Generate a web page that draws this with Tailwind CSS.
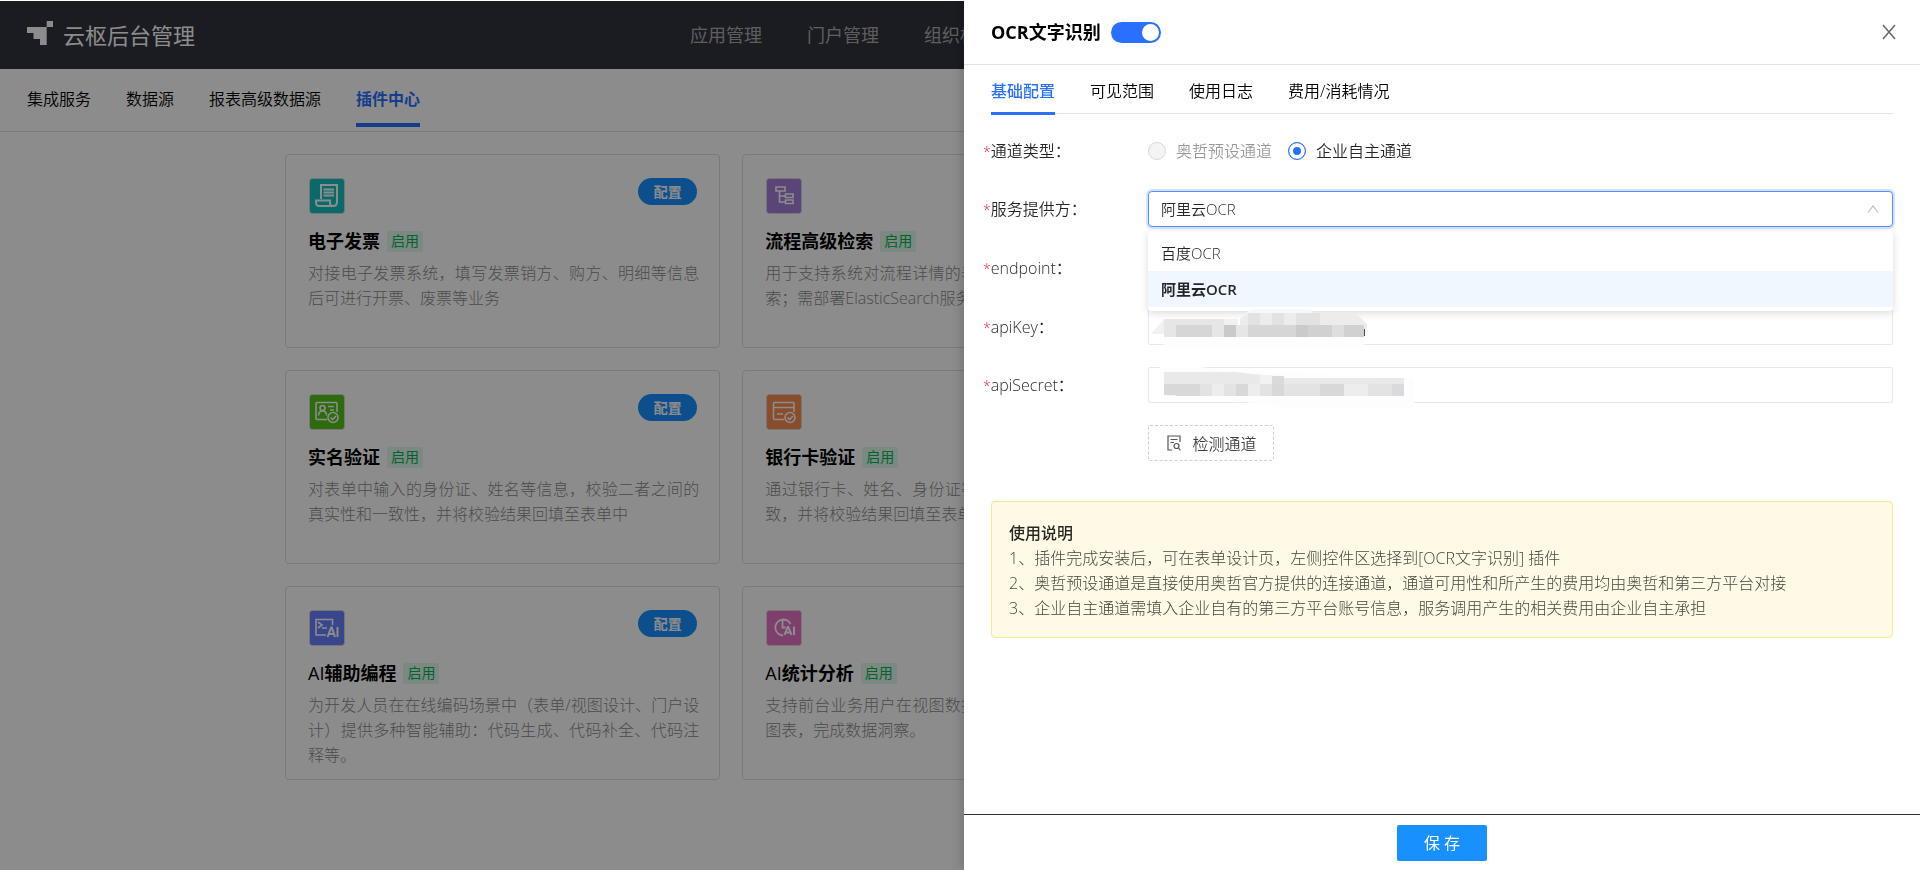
<!DOCTYPE html>
<html lang="zh-CN">
<head>
<meta charset="utf-8">
<title>云枢后台管理</title>
<script src="https://cdn.jsdelivr.net/npm/@tailwindcss/browser@4"></script>
</head>
<body class="min-h-screen bg-white pt-px font-['Open_Sans','Noto_Sans_CJK_SC',sans-serif] text-base text-black">

<header class="flex h-[68px] items-center bg-[#31333c] px-[27px] text-white">
  <div class="flex w-[663px] items-center gap-2.5">
    <svg class="mb-1 h-6 w-[26px]" viewBox="0 0 26 24" fill="currentColor" aria-hidden="true"><path d="M19.7 0H26v6h-6.3zM0 6h19.7v18H13v-6H6.5v-6H0z"/></svg>
    <h1 class="text-[22px] leading-8">云枢后台管理</h1>
  </div>
  <nav class="flex gap-[45px] text-lg text-white/60">
    <a href="#">应用管理</a>
    <a href="#">门户管理</a>
    <a href="#">组织权限</a>
  </nav>
</header>

<nav class="flex h-[63px] gap-[35px] border-b border-[#dedede] px-[27px] font-[350]">
  <a href="#" class="pt-[18px] leading-6">集成服务</a>
  <a href="#" class="pt-[18px] leading-6">数据源</a>
  <a href="#" class="pt-[18px] leading-6">报表高级数据源</a>
  <a href="#" class="mb-1 border-b-4 border-[#2970ff] pt-[18px] font-bold leading-6 text-[#2970ff]">插件中心</a>
</nav>

<main class="mx-auto grid max-w-[1350px] grid-cols-3 gap-[22px] pt-[22px]">
  <article class="col-start-1 min-h-[194px] rounded border border-[#dedede] pl-[22px] pr-5 pt-[23px]">
    <div class="flex items-start justify-between pl-px pr-0.5">
      <svg class="h-9 w-9" viewBox="0 0 36 36" fill="none" stroke="#fff" stroke-width="2" aria-hidden="true"><rect x=".5" y=".5" width="35" height="35" rx="3" fill="#13c2c2" stroke="#d9d9d9" stroke-width="1"/><path d="M12 21V7h16v17c0 4-3 4-4 4H11.500M14.500 11.500H25M14.500 14.500H25M14.500 17.500H25M16 28H10c-2 0-3-2-3-4v-1.500h14V25c0 1.500 1 3 3 3"/></svg>
      <button class="h-[27px] w-[59px] rounded-full bg-[#1890ff] text-sm font-bold text-white">配置</button>
    </div>
    <div class="mt-[13px] flex h-7 items-center gap-[7px]"><h2 class="text-lg font-bold">电子发票</h2><span class="flex h-[21px] items-center rounded-xs bg-[#e2f7ed] px-1 text-sm text-[#00b853]">启用</span></div>
    <p class="mt-1.5 text-justify font-light leading-[25px] text-[#8c8c8c]">对接电子发票系统，填写发票销方、购方、明细等信息后可进行开票、废票等业务</p>
  </article>

  <article class="col-start-2 min-h-[194px] rounded border border-[#dedede] pl-[22px] pr-5 pt-[23px]">
    <svg class="ml-px h-9 w-9" viewBox="0 0 36 36" fill="none" stroke="#fff" stroke-width="1.600" aria-hidden="true"><rect x=".5" y=".5" width="35" height="35" rx="3" fill="#a77ddb" stroke="#d9d9d9" stroke-width="1"/><path d="M10 9h9v4h-9zM19.500 16h7.500v3.500h-7.500zM19.500 22h7.500v3.500h-7.500zM13.500 13v11h6M13.500 18h6"/></svg>
    <div class="mt-[13px] flex h-7 items-center gap-[7px]"><h2 class="text-lg font-bold">流程高级检索</h2><span class="flex h-[21px] items-center rounded-xs bg-[#e2f7ed] px-1 text-sm text-[#00b853]">启用</span></div>
    <p class="mt-1.5 text-justify font-light leading-[25px] text-[#8c8c8c]">用于支持系统对流程详情的表单数据、审批意见进行检索；需部署ElasticSearch服务</p>
  </article>

  <article class="col-start-1 min-h-[194px] rounded border border-[#dedede] pl-[22px] pr-5 pt-[23px]">
    <div class="flex items-start justify-between pl-px pr-0.5">
      <svg class="h-9 w-9" viewBox="0 0 36 36" fill="none" stroke="#fff" stroke-width="1.600" aria-hidden="true"><rect x=".5" y=".5" width="35" height="35" rx="3" fill="#52c41a" stroke="#d9d9d9" stroke-width="1"/><path d="M18 25.500H8c-.8 0-1-.4-1-1v-15c0-.8.4-1 1-1h19c.8 0 1 .4 1 1V18M19 12.500h6M21 16h4M9.500 21.500c0-3 1.500-4.500 4-4.500s4 1.500 4 4.500"/><circle cx="13.500" cy="14" r="2.500"/><circle cx="24" cy="23.500" r="5"/><path d="m21.500 23.500 2 2 3.500-3.500"/></svg>
      <button class="h-[27px] w-[59px] rounded-full bg-[#1890ff] text-sm font-bold text-white">配置</button>
    </div>
    <div class="mt-[13px] flex h-7 items-center gap-[7px]"><h2 class="text-lg font-bold">实名验证</h2><span class="flex h-[21px] items-center rounded-xs bg-[#e2f7ed] px-1 text-sm text-[#00b853]">启用</span></div>
    <p class="mt-1.5 text-justify font-light leading-[25px] text-[#8c8c8c]">对表单中输入的身份证、姓名等信息，校验二者之间的真实性和一致性，并将校验结果回填至表单中</p>
  </article>

  <article class="col-start-2 min-h-[194px] rounded border border-[#dedede] pl-[22px] pr-5 pt-[23px]">
    <svg class="ml-px h-9 w-9" viewBox="0 0 36 36" fill="none" stroke="#fff" stroke-width="1.600" aria-hidden="true"><rect x=".5" y=".5" width="35" height="35" rx="3" fill="#fa8c50" stroke="#d9d9d9" stroke-width="1"/><path d="M18 25.500H8.500c-.8 0-1-.4-1-1v-15c0-.8.4-1 1-1h18.500c.8 0 1 .4 1 1V18M7.500 13.500H28M11 20h6"/><circle cx="24" cy="23.500" r="5"/><path d="m21.500 23.500 2 2 3.500-3.500"/></svg>
    <div class="mt-[13px] flex h-7 items-center gap-[7px]"><h2 class="text-lg font-bold">银行卡验证</h2><span class="flex h-[21px] items-center rounded-xs bg-[#e2f7ed] px-1 text-sm text-[#00b853]">启用</span></div>
    <p class="mt-1.5 text-justify font-light leading-[25px] text-[#8c8c8c]">通过银行卡、姓名、身份证等信息，校验各要素是否一致，并将校验结果回填至表单中</p>
  </article>

  <article class="col-start-1 min-h-[194px] rounded border border-[#dedede] pl-[22px] pr-5 pt-[23px]">
    <div class="flex items-start justify-between pl-px pr-0.5">
      <svg class="h-9 w-9" viewBox="0 0 36 36" fill="none" stroke="#fff" stroke-width="1.600" aria-hidden="true"><rect x=".5" y=".5" width="35" height="35" rx="3" fill="#6b80ff" stroke="#d9d9d9" stroke-width="1"/><path d="M17 25H7V9.500h16.500V15M9 12l4 3-4 3M13 18h5"/><path d="m18.500 27 3.700-9.500h.6L26 27M20 24h5M28.500 17v10" stroke-width="2"/></svg>
      <button class="h-[27px] w-[59px] rounded-full bg-[#1890ff] text-sm font-bold text-white">配置</button>
    </div>
    <div class="mt-[13px] flex h-7 items-center gap-[7px]"><h2 class="text-lg font-bold"><span class="font-medium">AI</span>辅助编程</h2><span class="flex h-[21px] items-center rounded-xs bg-[#e2f7ed] px-1 text-sm text-[#00b853]">启用</span></div>
    <p class="mt-1.5 text-justify font-light leading-[25px] text-[#8c8c8c]">为开发人员在在线编码场景中（表单/视图设计、门户设计）提供多种智能辅助：代码生成、代码补全、代码注释等。</p>
  </article>

  <article class="col-start-2 min-h-[194px] rounded border border-[#dedede] pl-[22px] pr-5 pt-[23px]">
    <svg class="ml-px h-9 w-9" viewBox="0 0 36 36" fill="none" stroke="#fff" stroke-width="1.800" aria-hidden="true"><rect x=".5" y=".5" width="35" height="35" rx="3" fill="#e873c8" stroke="#d9d9d9" stroke-width="1"/><path d="M17 25.500A8 8 0 1 1 24.500 14M16.500 9.500v8h3"/><path d="m18.500 25 3.200-8h.6l3.200 8M20 22.500h4M28 16.500V25" stroke-width="2"/></svg>
    <div class="mt-[13px] flex h-7 items-center gap-[7px]"><h2 class="text-lg font-bold"><span class="font-medium">AI</span>统计分析</h2><span class="flex h-[21px] items-center rounded-xs bg-[#e2f7ed] px-1 text-sm text-[#00b853]">启用</span></div>
    <p class="mt-1.5 text-justify font-light leading-[25px] text-[#8c8c8c]">支持前台业务用户在视图数据列表中通过对话快速生成图表，完成数据洞察。</p>
  </article>
</main>

<div class="fixed inset-0 top-px bg-black/45"></div>

<aside role="dialog" aria-labelledby="drawer-title" class="fixed inset-y-0 right-0 flex w-[956px] max-w-full flex-col bg-white shadow-[-4px_0_10px_rgba(0,0,0,0.15)]">
  <header class="flex h-[65px] items-center border-b border-[#e4e4e4] pl-[27px] pr-6">
    <h2 id="drawer-title" class="text-lg font-bold">OCR文字识别</h2>
    <label class="ml-2.5 flex">
      <input type="checkbox" checked aria-label="启用OCR文字识别" class="peer sr-only">
      <span class="flex h-[21px] w-[50px] items-center justify-end rounded-full bg-[#2970ff] p-0.5"><span class="h-[17px] w-[17px] rounded-full bg-white"></span></span>
    </label>
    <button aria-label="关闭" class="ml-auto">
      <svg class="h-4 w-[14px]" viewBox="0 0 14 16" fill="none" stroke="#666" stroke-width="1.500"><path d="m1 1 12 14M13 1 1 15"/></svg>
    </button>
  </header>

  <div class="flex-1 px-[27px]">
    <div role="tablist" class="flex h-[49px] gap-[35px] border-b border-[#e4e4e4] font-[350]">
      <button role="tab" aria-selected="true" class="-mb-0.5 border-b-3 border-[#2970ff] pt-1 font-medium text-[#2970ff]">基础配置</button>
      <button role="tab" class="pt-1">可见范围</button>
      <button role="tab" class="pt-1">使用日志</button>
      <button role="tab" class="pt-1">费用/消耗情况</button>
    </div>

    <form class="mt-[19px] flex flex-col gap-[22px] font-[350] text-black/85">
      <div class="flex h-9 items-center" role="radiogroup" aria-labelledby="type-label">
        <span id="type-label" class="-ml-2 w-[165px]"><span class="text-sm text-[#f5222d]">*</span>通道类型：</span>
        <label class="flex items-center gap-2.5 text-black/40"><input type="radio" name="channel" disabled class="h-[18px] w-[18px] appearance-none rounded-full border border-[#d9d9d9] bg-[#f4f4f4]">奥哲预设通道</label>
        <label class="ml-4 flex items-center gap-2.5"><input type="radio" name="channel" checked class="h-[18px] w-[18px] appearance-none rounded-full border border-[#2970ff] bg-[#2970ff] shadow-[inset_0_0_0_4px_#fff]">企业自主通道</label>
      </div>

      <div class="relative flex h-9 items-center">
        <label for="provider" class="-ml-2 w-[165px]"><span class="text-sm text-[#f5222d]">*</span>服务提供方：</label>
        <div class="relative flex-1">
          <select id="provider" class="block h-9 w-full appearance-none rounded border border-[#5490ff] bg-white px-3 text-[15px] shadow-[0_0_0_2px_#d4e2ff] outline-none">
            <option selected>阿里云OCR</option>
            <option>百度OCR</option>
          </select>
          <svg class="pointer-events-none absolute right-[14px] top-[14px] h-2 w-3" viewBox="0 0 12 8" fill="none" stroke="#bfbfbf" stroke-width="1.200" aria-hidden="true"><path d="m1 7.500 5-6.500 5 6.500"/></svg>
          <ul role="listbox" class="absolute inset-x-0 top-10 z-10 rounded bg-white py-1 text-[15px] leading-9 shadow-[0_2px_8px_rgba(0,0,0,0.15)]">
            <li role="option" class="px-[13px]">百度OCR</li>
            <li role="option" aria-selected="true" class="bg-[#f0f7ff] px-[13px] font-semibold">阿里云OCR</li>
          </ul>
        </div>
      </div>

      <div class="flex h-[37px] items-center">
        <label for="endpoint" class="-ml-2 w-[165px]"><span class="text-sm text-[#f5222d]">*</span>endpoint：</label>
        <input id="endpoint" type="text" class="h-9 flex-1 rounded-xs border border-[#e8e8e8] px-3">
      </div>

      <div class="flex h-[37px] items-center">
        <label for="api-key" class="-ml-2 w-[165px]"><span class="text-sm text-[#f5222d]">*</span>apiKey：</label>
        <div class="relative flex-1">
          <input id="api-key" type="text" class="block h-9 w-full rounded-xs border border-[#e8e8e8] px-3">
          <!-- pixelated mask over the stored key -->
          <svg class="absolute left-0 top-0 z-20 h-10 w-56" viewBox="0 0 224 40" aria-hidden="true">
            <path d="M16 28h200v12H16z" fill="#fdfdfd"/>
            <path d="M93 9 106 -3h33l25 4v4z" fill="#f5f8fe"/>
            <path d="M3 25 16 10h74v6H28v9z" fill="#f1f1f1"/>
            <path d="M92 10 100 4h108l11 11v5H92z" fill="#ececec"/>
            <path d="M16 10h60v6H16z" fill="#e6e6e6"/>
            <path d="M100 4h12v12h-12zM124 4h12v12h-12zM148 4h24v12h-24z" fill="#e2e2e2"/>
            <path d="M16 16h12v12H16zM64 16h12v12H64zM88 16h12v12H88z" fill="#e6e6e6"/>
            <path d="M28 16h36v12H28zM100 16h48v12h-48z" fill="#d6d6d6"/>
            <path d="M76 16h12v12H76zM148 16h12v12h-12z" fill="#cacaca"/>
            <path d="M160 16h24v12h-24zM196 16h20v12h-20z" fill="#d0d1d2"/>
            <path d="M184 16h12v12h-12z" fill="#dedede"/>
            <path d="M216 20h1v7h-1z" fill="#444"/>
          </svg>
        </div>
      </div>

      <div class="flex h-9 items-center">
        <label for="api-secret" class="-ml-2 w-[165px]"><span class="text-sm text-[#f5222d]">*</span>apiSecret：</label>
        <div class="relative flex-1">
          <input id="api-secret" type="text" class="block h-9 w-full rounded-xs border border-[#e8e8e8] px-3">
          <!-- pixelated mask over the stored secret -->
          <svg class="absolute left-0 top-0 h-[42px] w-[266px]" viewBox="0 0 266 42" aria-hidden="true">
            <path d="M12 0h40l32 4 182 7v30H140L82 33H12z" fill="#fdfdfd"/>
            <path d="M16 5h72l16 2 24 2v8H16z" fill="#e8e9e9"/>
            <path d="M112 8h12v9h-12z" fill="#f2f2f2"/>
            <path d="M124 9h12v8h-12z" fill="#dadada"/>
            <path d="M136 11h120v6H136z" fill="#e9e9e9"/>
            <path d="M16 17h240v12H38l-22-1z" fill="#e3e3e3"/>
            <path d="M16 17h12v11H16zM28 17h24v12H28zM88 17h12v12H88zM124 17h12v12h-12zM172 17h24v12h-24z" fill="#d7d8d8"/>
            <path d="M244 17h12v12h-12z" fill="#d9dadd"/>
            <path d="M64 17h12v12H64zM100 17h12v12h-12zM196 17h24v12h-24z" fill="#ededed"/>
          </svg>
        </div>
      </div>

      <button type="button" class="ml-[157px] flex h-9 w-[126px] items-center justify-center gap-[11px] rounded-xs border border-dashed border-[#d0d0d0] pl-0.5 text-black/75">
        <svg class="h-4 w-[14px]" viewBox="0 0 14 16" fill="none" stroke="#555" stroke-width="1.200" aria-hidden="true"><path d="M5 15H1V1h12v6M3.500 4.500h7M3.500 7.500H7"/><circle cx="9.500" cy="11" r="2.500"/><path d="m11.500 13 2 2.500"/></svg>
        <span class="pt-0.5">检测通道</span>
      </button>
    </form>

    <section class="mt-10 rounded border border-[#ffe58f] bg-[#fffae6] px-[17px] pb-4 pt-[19px] leading-[25px]">
      <h3 class="font-medium text-black/85">使用说明</h3>
      <ol class="font-light text-black/75">
        <li>1、插件完成安装后，可在表单设计页，左侧控件区选择到[OCR文字识别] 插件</li>
        <li>2、奥哲预设通道是直接使用奥哲官方提供的连接通道，通道可用性和所产生的费用均由奥哲和第三方平台对接</li>
        <li>3、企业自主通道需填入企业自有的第三方平台账号信息，服务调用产生的相关费用由企业自主承担</li>
      </ol>
    </section>
  </div>

  <footer class="flex h-14 justify-center border-t border-[#333] pt-2.5">
    <button class="h-9 w-[90px] rounded-xs bg-[#1890ff] text-white">保 存</button>
  </footer>
</aside>
</body>
</html>
